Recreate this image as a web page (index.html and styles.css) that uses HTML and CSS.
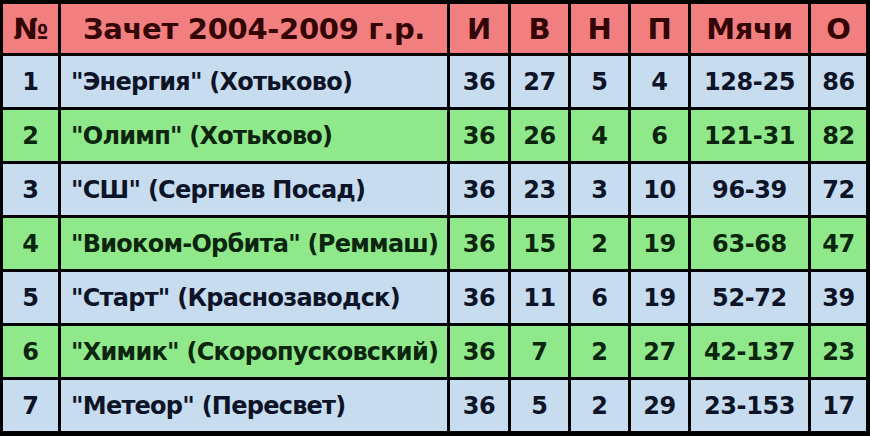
FILE: index.html
```html
<!DOCTYPE html>
<html lang="ru">
<head>
<meta charset="utf-8">
<title>Зачет 2004-2009 г.р.</title>
<link rel="stylesheet" href="styles.css">
</head>
<body>
<div class="table" role="table">
  <div class="row head" role="row">
    <div class="c num">№</div>
    <div class="c title">Зачет 2004-2009 г.р.</div>
    <div class="c">И</div>
    <div class="c">В</div>
    <div class="c">Н</div>
    <div class="c">П</div>
    <div class="c">Мячи</div>
    <div class="c">О</div>
  </div>
  <div class="row blue" role="row">
    <div class="c num">1</div><div class="c team">"Энергия" (Хотьково)</div>
    <div class="c">36</div><div class="c">27</div><div class="c">5</div><div class="c">4</div><div class="c">128-25</div><div class="c">86</div>
  </div>
  <div class="row green" role="row">
    <div class="c num">2</div><div class="c team">"Олимп" (Хотьково)</div>
    <div class="c">36</div><div class="c">26</div><div class="c">4</div><div class="c">6</div><div class="c">121-31</div><div class="c">82</div>
  </div>
  <div class="row blue" role="row">
    <div class="c num">3</div><div class="c team">"СШ" (Сергиев Посад)</div>
    <div class="c">36</div><div class="c">23</div><div class="c">3</div><div class="c">10</div><div class="c">96-39</div><div class="c">72</div>
  </div>
  <div class="row green" role="row">
    <div class="c num">4</div><div class="c team">"Виоком-Орбита" (Реммаш)</div>
    <div class="c">36</div><div class="c">15</div><div class="c">2</div><div class="c">19</div><div class="c">63-68</div><div class="c">47</div>
  </div>
  <div class="row blue" role="row">
    <div class="c num">5</div><div class="c team">"Старт" (Краснозаводск)</div>
    <div class="c">36</div><div class="c">11</div><div class="c">6</div><div class="c">19</div><div class="c">52-72</div><div class="c">39</div>
  </div>
  <div class="row green" role="row">
    <div class="c num">6</div><div class="c team">"Химик" (Скоропусковский)</div>
    <div class="c">36</div><div class="c">7</div><div class="c">2</div><div class="c">27</div><div class="c">42-137</div><div class="c">23</div>
  </div>
  <div class="row blue" role="row">
    <div class="c num">7</div><div class="c team">"Метеор" (Пересвет)</div>
    <div class="c">36</div><div class="c">5</div><div class="c">2</div><div class="c">29</div><div class="c">23-153</div><div class="c">17</div>
  </div>
</div>
</body>
</html>
```
FILE: styles.css
```css
html, body {
  margin: 0;
  padding: 0;
  background: #000;
}
.table {
  width: 870px;
  height: 436px;
  box-sizing: border-box;
  padding: 4px 5px 5px 3px;
  background: #000;
  display: grid;
  grid-template-rows: 49px repeat(7, 51px);
  row-gap: 3px;
  font-family: "DejaVu Sans", Verdana, sans-serif;
  font-weight: bold;
}
.row {
  display: grid;
  grid-template-columns: 55px 386px 58px 57px 57px 57px 117px 55px;
  column-gap: 3px;
}
.c {
  display: flex;
  align-items: center;
  justify-content: center;
  font-size: 24px;
  letter-spacing: -0.4px;
  white-space: nowrap;
  overflow: hidden;
}
.head .c {
  background: #f27f80;
  color: #330505;
  font-size: 29px;
  letter-spacing: -0.3px;
}
.blue .c {
  background: #c7dcef;
  color: #0e1428;
}
.green .c {
  background: #8fe98a;
  color: #0b250e;
}
.c.team {
  justify-content: flex-start;
  padding-left: 10px;
  letter-spacing: -0.75px;
}
```
